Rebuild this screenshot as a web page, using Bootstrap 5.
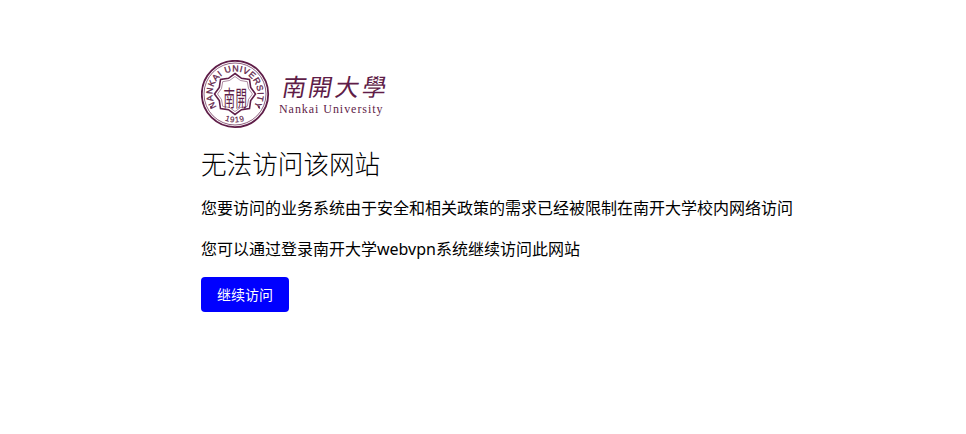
<!DOCTYPE html>
<html lang="zh-CN">
<head>
    <meta charset="UTF-8">
    <meta name="viewport" content="width=device-width, initial-scale=1.0">
    <title>无法访问该网站</title>
    <link href="https://cdn.jsdelivr.net/npm/bootstrap@5.3.0/dist/css/bootstrap.min.css" rel="stylesheet">
    <style>
        body {
            font-family: "Noto Sans", "Noto Sans CJK SC", sans-serif;
            color: #000;
            background: #fff;
        }
        .page-wrap {
            padding: 60px 0 0 201px;
        }
        .school-logo {
            display: block;
            width: 190px;
            height: 70px;
            margin-bottom: 17px;
        }
        .page-title {
            font-size: 25.6px;
            font-weight: 300;
            line-height: 36px;
            margin-bottom: 13px;
        }
        .page-text {
            font-size: 16px;
            line-height: 24px;
            margin-bottom: 17px;
        }
        .page-text-last {
            margin-bottom: 16px;
        }
        .go-btn {
            display: block;
            width: 88px;
            height: 35px;
            padding: 0;
            font-size: 14px;
            line-height: 35px;
            border: 0;
            border-radius: 4px;
            background: #0000ff;
            color: #fff;
        }
        .go-btn:hover {
            background: #0000d0;
            color: #fff;
        }
    </style>
</head>
<body>
    <div class="page-wrap">
        <svg class="school-logo" viewBox="0 0 190 70" fill="none" role="img" aria-label="南开大学">
            <defs>
                <path id="sealTop" d="M15.570 46.900A22.500 22.500 0 1 1 52.430 46.900"/>
                <path id="sealBottom" d="M14 54A28.300 28.300 0 0 0 54 54"/>
            </defs>
            <g stroke="#5f1d48">
                <circle cx="34" cy="34" r="33.200" stroke-width="1.800"/>
                <circle cx="34" cy="34" r="31" stroke-width=".7"/>
                <path d="M34 13.500L40.500 18.300 48.500 19.500 49.700 27.500 54.500 34 49.700 40.500 48.500 48.500 40.500 49.700 34 54.500 27.500 49.700 19.500 48.500 18.300 40.500 13.500 34 18.300 27.500 19.500 19.500 27.500 18.300z" stroke-width="1.600" fill="#fff"/>
                <path d="M34 16.500L39.500 20.500 46.300 21.700 47.500 28.500 51.500 34 47.500 39.500 46.300 46.300 39.500 47.500 34 51.500 28.500 47.500 21.700 46.300 20.500 39.500 16.500 34 20.500 28.500 21.700 21.700 28.500 20.500z" stroke-width=".5"/>
            </g>
            <text font-family="Liberation Sans, sans-serif" font-size="8.800" fill="#5f1d48" stroke="#5f1d48" stroke-width=".3">
                <textPath href="#sealTop" startOffset="0" textLength="97">NANKAI UNIVERSITY</textPath>
            </text>
            <text font-family="Liberation Sans, sans-serif" font-size="8" fill="#5f1d48" stroke="#5f1d48" stroke-width=".15" letter-spacing=".8" text-anchor="middle">
                <textPath href="#sealBottom" startOffset="50%">1919</textPath>
            </text>
            <circle cx="10" cy="47" r="1" fill="#5f1d48"/>
            <circle cx="58" cy="47" r="1" fill="#5f1d48"/>
            <g font-family="Noto Sans CJK TC, sans-serif" font-size="11.500" fill="#5f1d48">
                <text transform="translate(22.500 46) scale(1 1.900)">南</text>
                <text transform="translate(34.500 46) scale(1 1.900)">開</text>
            </g>
            <g font-family="Noto Sans CJK TC, sans-serif" font-size="24" fill="#5f1d48">
                <text transform="translate(80 36) skewX(-10)">南</text>
                <text transform="translate(106 36) skewX(-10)">開</text>
                <text transform="translate(133 36) skewX(-10)">大</text>
                <text transform="translate(160 36) skewX(-10)">學</text>
            </g>
            <text x="78" y="53" font-family="Liberation Serif, serif" font-size="12" letter-spacing=".95" fill="#5f1d48">Nankai University</text>
        </svg>

        <h1 class="page-title">无法访问该网站</h1>
        <p class="page-text">您要访问的业务系统由于安全和相关政策的需求已经被限制在南开大学校内网络访问</p>
        <p class="page-text page-text-last">您可以通过登录南开大学webvpn系统继续访问此网站</p>
        <button type="button" class="btn go-btn">继续访问</button>
    </div>

    <script src="https://cdn.jsdelivr.net/npm/bootstrap@5.3.0/dist/js/bootstrap.bundle.min.js"></script>
</body>
</html>
